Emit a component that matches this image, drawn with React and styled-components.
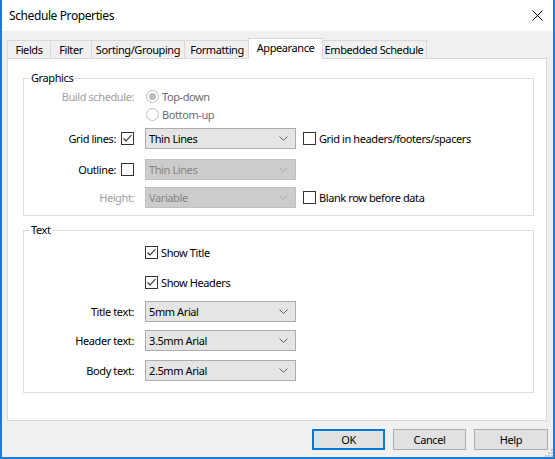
import React from 'react';
import styled, { createGlobalStyle, css } from 'styled-components';

const Global = createGlobalStyle`
  html, body { margin: 0; padding: 0; background: #fff; }
  body {
    font-family: "Noto Sans", "Segoe UI", sans-serif;
    font-size: 11px;
    letter-spacing: -0.4px;
    color: #000;
    overflow: hidden;
  }
  * { box-sizing: border-box; }
`;

const Window = styled.div`
  position: relative;
  width: 555px;
  height: 459px;
  border: 2px solid #1c7cd5;
  border-top: none;
  background: #f0f0f0;
  display: flex;
  flex-direction: column;
`;

const TitleBar = styled.div`
  height: 31px;
  flex: none;
  background: #fff;
  display: flex;
  align-items: center;
  justify-content: space-between;
  padding-left: 7px;
  font-size: 12px;
  letter-spacing: -0.4px;
`;

const CloseButton = styled.div`
  width: 32px;
  height: 31px;
  display: flex;
  align-items: center;
  justify-content: center;
`;

const Body = styled.div`
  flex: 1;
  display: flex;
  flex-direction: column;
  padding: 7px 0 0 5px;
`;

const TabBar = styled.div`
  display: flex;
  align-items: flex-end;
  height: 21px;
  margin-bottom: -1px;
`;

const Tab = styled.div`
  width: ${p => p.$w}px;
  height: 19px;
  margin-left: -1px;
  border: 1px solid #d9d9d9;
  border-bottom: none;
  background: #f0f0f0;
  display: flex;
  align-items: center;
  justify-content: center;
  padding-bottom: 1px;
  white-space: nowrap;
  &:first-child { margin-left: 0; }
  ${p => p.$active && css`
    position: relative;
    z-index: 1;
    height: 21px;
    width: ${p.$w + 3}px;
    margin-left: -2px;
    margin-right: -1px;
    background: #fff;
    padding-bottom: 3px;
  `}
`;

const Panel = styled.div`
  width: 540px;
  height: 363px;
  background: #fff;
  border: 1px solid #d9d9d9;
  display: flex;
  flex-direction: column;
`;

const Group = styled.fieldset`
  margin: ${p => p.$top}px 12px 0 15px;
  padding: ${p => p.$pt}px 0 ${p => p.$pb}px 0;
  border: 1px solid #dcdcdc;
  min-width: 0;
`;

const Legend = styled.legend`
  margin-left: 5px;
  padding: 0 2px;
  line-height: 16px;
  height: 16px;
`;

const Row = styled.div`
  display: flex;
  align-items: center;
  height: ${p => p.$h}px;
`;

const LabelCell = styled.div`
  width: 110px;
  flex: none;
  display: flex;
  align-items: center;
  justify-content: flex-end;
  gap: 5px;
  white-space: nowrap;
  color: ${p => (p.$disabled ? '#a0a0a0' : '#000')};
`;

const ControlCell = styled.div`
  margin-left: 11px;
  display: flex;
  align-items: center;
`;

const BoxLabel = styled.label`
  display: flex;
  align-items: center;
  gap: 3px;
  white-space: nowrap;
  color: ${p => (p.$disabled ? '#6d6d6d' : '#000')};
  margin-left: ${p => p.$ml || 0}px;
`;

const Box = styled.span`
  width: 13px;
  height: 13px;
  flex: none;
  border: 1px solid #333;
  background: #fff;
  display: flex;
  align-items: center;
  justify-content: center;
`;

const Radio = styled.span`
  width: 13px;
  height: 13px;
  flex: none;
  border-radius: 50%;
  border: 1px solid #bcbcbc;
  background: #fff;
  display: flex;
  align-items: center;
  justify-content: center;
  margin-left: 1px;
  &::after {
    content: '';
    width: 7px;
    height: 7px;
    border-radius: 50%;
    background: ${p => (p.$checked ? '#bcbcbc' : 'transparent')};
  }
`;

const Select = styled.div`
  width: 151px;
  height: 21px;
  flex: none;
  display: flex;
  align-items: center;
  justify-content: space-between;
  padding: 0 7px 0 3px;
  border: 1px solid ${p => (p.$disabled ? '#bfbfbf' : '#acacac')};
  background: ${p => (p.$disabled ? '#cccccc' : '#e5e5e5')};
  color: ${p => (p.$disabled ? '#838383' : '#000')};
  white-space: nowrap;
`;

const ButtonRow = styled.div`
  display: flex;
  justify-content: flex-end;
  gap: 8px;
  margin-top: 8px;
  padding-right: 5px;
`;

const Button = styled.div`
  width: ${p => p.$w || 73}px;
  height: 21px;
  display: flex;
  align-items: center;
  justify-content: center;
  background: #e1e1e1;
  border: ${p => (p.$default ? '2px solid #0078d7' : '1px solid #adadad')};
`;

const Grip = styled.svg`
  position: absolute;
  right: 0;
  bottom: 0;
`;

function Chevron({ disabled }) {
  return (
    <svg width="9" height="5" viewBox="0 0 9 5">
      <path d="M0.5 0.5 L4.5 4.5 L8.5 0.5" fill="none" stroke={disabled ? '#a8a8a8' : '#606060'} strokeWidth="1" />
    </svg>
  );
}

function Check({ checked }) {
  return (
    <Box>
      {checked && (
        <svg width="11" height="11" viewBox="0 0 11 11">
          <path d="M1.5 5.5 L4 8 L9.5 2" fill="none" stroke="#222" strokeWidth="1.1" />
        </svg>
      )}
    </Box>
  );
}

function Dropdown({ value, disabled }) {
  return (
    <Select $disabled={disabled}>
      <span>{value}</span>
      <Chevron disabled={disabled} />
    </Select>
  );
}

const tabs = [
  { label: 'Fields', w: 44 },
  { label: 'Filter', w: 42 },
  { label: 'Sorting/Grouping', w: 94 },
  { label: 'Formatting', w: 66 },
  { label: 'Appearance', w: 72, active: true },
  { label: 'Embedded Schedule', w: 106 },
];

export default function App() {
  return (
    <>
      <Global />
      <Window>
        <TitleBar>
          <span>Schedule Properties</span>
          <CloseButton>
            <svg width="11" height="11" viewBox="0 0 11 11">
              <path d="M0.5 0.5 L10.5 10.5 M10.5 0.5 L0.5 10.5" stroke="#000" strokeWidth="1" />
            </svg>
          </CloseButton>
        </TitleBar>
        <Body>
          <TabBar>
            {tabs.map(t => (
              <Tab key={t.label} $w={t.w} $active={t.active}>{t.label}</Tab>
            ))}
          </TabBar>
          <Panel>
            <Group $top={11} $pt={1} $pb={6}>
              <Legend>Graphics</Legend>
              <Row $h={18}>
                <LabelCell $disabled>Build schedule:</LabelCell>
                <ControlCell>
                  <BoxLabel $disabled><Radio $checked />Top-down</BoxLabel>
                </ControlCell>
              </Row>
              <Row $h={18}>
                <LabelCell />
                <ControlCell>
                  <BoxLabel $disabled><Radio />Bottom-up</BoxLabel>
                </ControlCell>
              </Row>
              <Row $h={30}>
                <LabelCell>Grid lines:<Check checked /></LabelCell>
                <ControlCell>
                  <Dropdown value="Thin Lines" />
                  <BoxLabel $ml={7}><Check />Grid in headers/footers/spacers</BoxLabel>
                </ControlCell>
              </Row>
              <Row $h={32}>
                <LabelCell>Outline:<Check /></LabelCell>
                <ControlCell>
                  <Dropdown value="Thin Lines" disabled />
                </ControlCell>
              </Row>
              <Row $h={24}>
                <LabelCell $disabled>Height:</LabelCell>
                <ControlCell>
                  <Dropdown value="Variable" disabled />
                  <BoxLabel $ml={7}><Check />Blank row before data</BoxLabel>
                </ControlCell>
              </Row>
            </Group>
            <Group $top={6} $pt={0} $pb={6}>
              <Legend>Text</Legend>
              <Row $h={29}>
                <LabelCell />
                <ControlCell>
                  <BoxLabel><Check checked />Show Title</BoxLabel>
                </ControlCell>
              </Row>
              <Row $h={30}>
                <LabelCell />
                <ControlCell>
                  <BoxLabel><Check checked />Show Headers</BoxLabel>
                </ControlCell>
              </Row>
              <Row $h={28}>
                <LabelCell>Title text:</LabelCell>
                <ControlCell><Dropdown value="5mm Arial" /></ControlCell>
              </Row>
              <Row $h={30}>
                <LabelCell>Header text:</LabelCell>
                <ControlCell><Dropdown value="3.5mm Arial" /></ControlCell>
              </Row>
              <Row $h={31}>
                <LabelCell>Body text:</LabelCell>
                <ControlCell><Dropdown value="2.5mm Arial" /></ControlCell>
              </Row>
            </Group>
          </Panel>
          <ButtonRow>
            <Button $default>OK</Button>
            <Button>Cancel</Button>
            <Button $w={74}>Help</Button>
          </ButtonRow>
        </Body>
        <Grip width="8" height="8" viewBox="0 0 8 8">
          <rect x="6" y="0" width="2" height="2" fill="#c8c8c8" />
          <rect x="3" y="3" width="2" height="2" fill="#c8c8c8" />
          <rect x="6" y="3" width="2" height="2" fill="#c8c8c8" />
          <rect x="0" y="6" width="2" height="2" fill="#c8c8c8" />
          <rect x="3" y="6" width="2" height="2" fill="#c8c8c8" />
          <rect x="6" y="6" width="2" height="2" fill="#c8c8c8" />
        </Grip>
      </Window>
    </>
  );
}
